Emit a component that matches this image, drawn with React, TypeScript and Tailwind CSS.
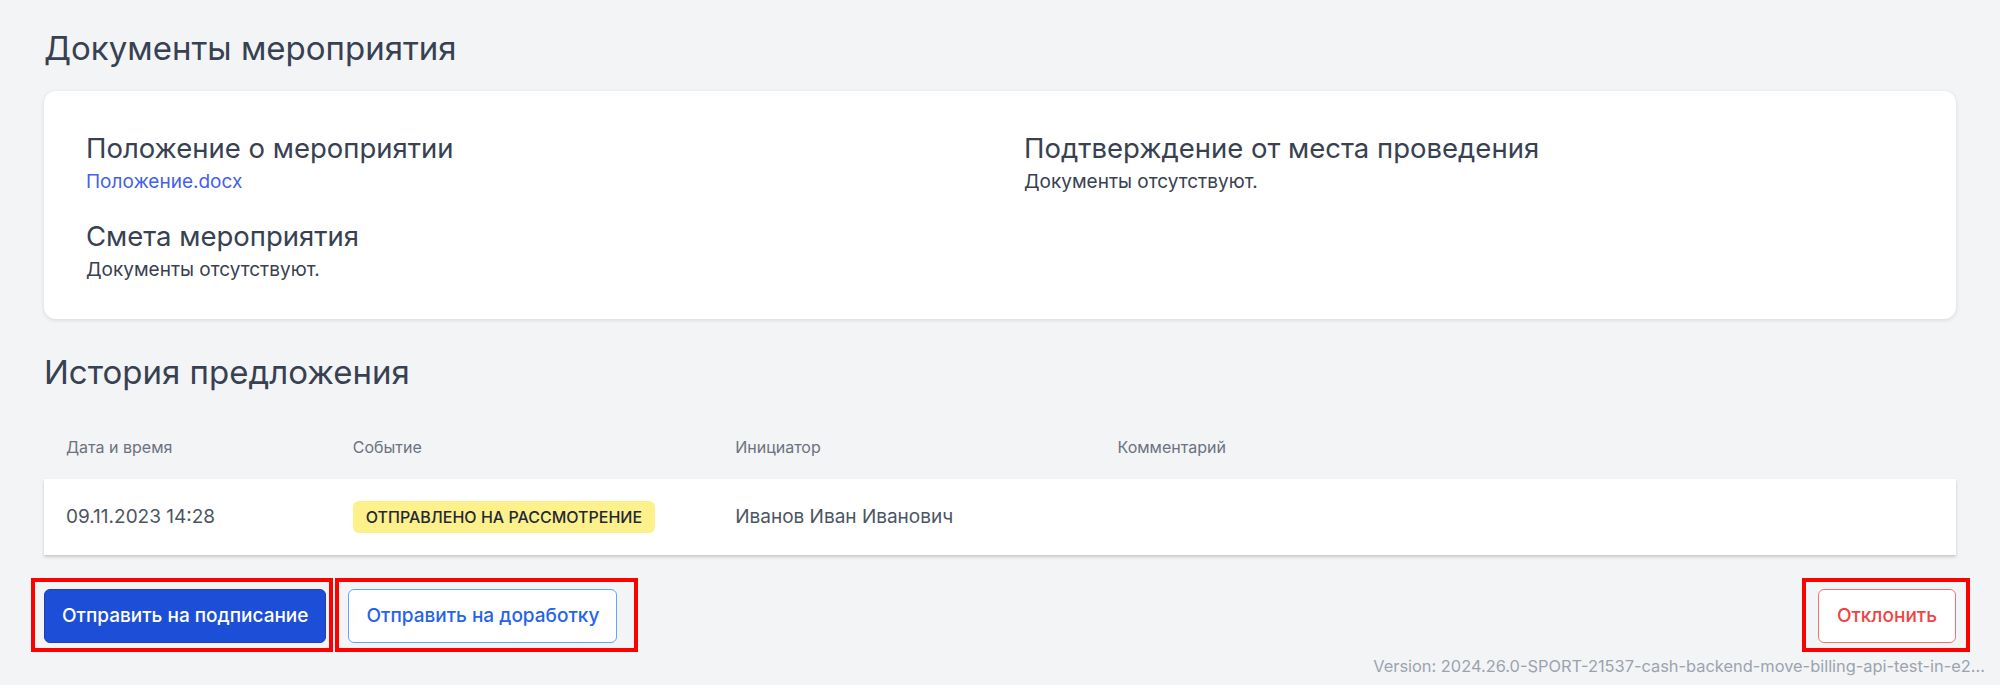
import React from "react";

const history = [
  {
    date: "09.11.2023 14:28",
    event: "Отправлено на рассмотрение",
    initiator: "Иванов Иван Иванович",
    comment: "",
  },
];

function DocBlock({ title, children }: { title: string; children: React.ReactNode }) {
  return (
    <div>
      <h3 className="text-[27.5px] leading-8 text-[#374151]">{title}</h3>
      <div className="mt-1.5 text-[19px] leading-6">{children}</div>
    </div>
  );
}

export default function App() {
  return (
    <div
      className="min-h-[685px] bg-[#f3f4f6] px-[44px] pt-[30px]"
      style={{ fontFamily: "Inter, 'Noto Sans', sans-serif" }}
    >
      {/* Documents */}
      <h2 className="text-[33px] leading-9 text-[#374151]">Документы мероприятия</h2>
      <div className="mt-[25px] rounded-xl bg-white px-[42px] pt-[41px] pb-[37px] shadow-[0_1px_4px_rgba(0,0,0,0.12)]">
        <div className="grid grid-cols-2 gap-x-12 gap-y-[26px]">
          <DocBlock title="Положение о мероприятии">
            <a href="#" className="text-[#4361ee]">
              Положение.docx
            </a>
          </DocBlock>
          <DocBlock title="Подтверждение от места проведения">
            <span className="text-[#374151]">Документы отсутствуют.</span>
          </DocBlock>
          <DocBlock title="Смета мероприятия">
            <span className="text-[#374151]">Документы отсутствуют.</span>
          </DocBlock>
        </div>
      </div>

      {/* History */}
      <h2 className="mt-[35px] text-[33px] leading-9 text-[#374151]">История предложения</h2>
      <div className="mt-[25px]">
        <div className="grid grid-cols-[15%_20%_20%_45%] py-[22px] text-base leading-5 text-[#6b7280]">
          <div className="px-[22px]">Дата и время</div>
          <div className="px-[22px]">Событие</div>
          <div className="px-[22px]">Инициатор</div>
          <div className="px-[22px]">Комментарий</div>
        </div>
        {history.map((row) => (
          <div
            key={row.date}
            className="grid h-[76px] grid-cols-[15%_20%_20%_45%] items-center bg-white text-[19px] leading-6 text-[#4b5563] shadow-[0_2px_3px_rgba(0,0,0,0.18)]"
          >
            <div className="px-[22px]">{row.date}</div>
            <div className="px-[22px]">
              <span className="inline-flex h-8 items-center rounded-md bg-[#fef08a] px-[13px] text-base font-medium uppercase text-[#1f2937]">
                {row.event}
              </span>
            </div>
            <div className="px-[22px]">{row.initiator}</div>
            <div className="px-[22px]">{row.comment}</div>
          </div>
        ))}
      </div>

      {/* Actions */}
      <div className="relative mt-[34px] flex items-center justify-between">
        <div className="flex gap-[22px]">
          <button className="h-[54px] rounded-md border border-[#1e40af] bg-[#1d4ed8] px-[17px] text-[19px] font-medium text-white">
            Отправить на подписание
          </button>
          <button className="h-[54px] rounded-md border border-[#60a5fa] bg-white px-[17px] text-[19px] font-medium text-[#2563eb]">
            Отправить на доработку
          </button>
        </div>
        <button className="h-[54px] rounded-md border border-[#f87171] bg-white px-[18px] text-[19px] font-medium text-[#ef4444]">
          Отклонить
        </button>

        {/* highlight frames */}
        <span className="pointer-events-none absolute left-[-13px] top-[-11px] h-[74px] w-[302px] border-4 border-[#ff0000]" />
        <span className="pointer-events-none absolute left-[291px] top-[-11px] h-[74px] w-[303px] border-4 border-[#ff0000]" />
        <span className="pointer-events-none absolute right-[-14px] top-[-11px] h-[74px] w-[168px] border-4 border-[#ff0000]" />
      </div>

      <div className="-mr-[29px] mt-[13px] flex justify-end">
        <div className="whitespace-nowrap text-[16.4px] leading-5 text-[#9ca3af]">
          Version: 2024.26.0-SPORT-21537-cash-backend-move-billing-api-test-in-e2...
        </div>
      </div>
    </div>
  );
}
